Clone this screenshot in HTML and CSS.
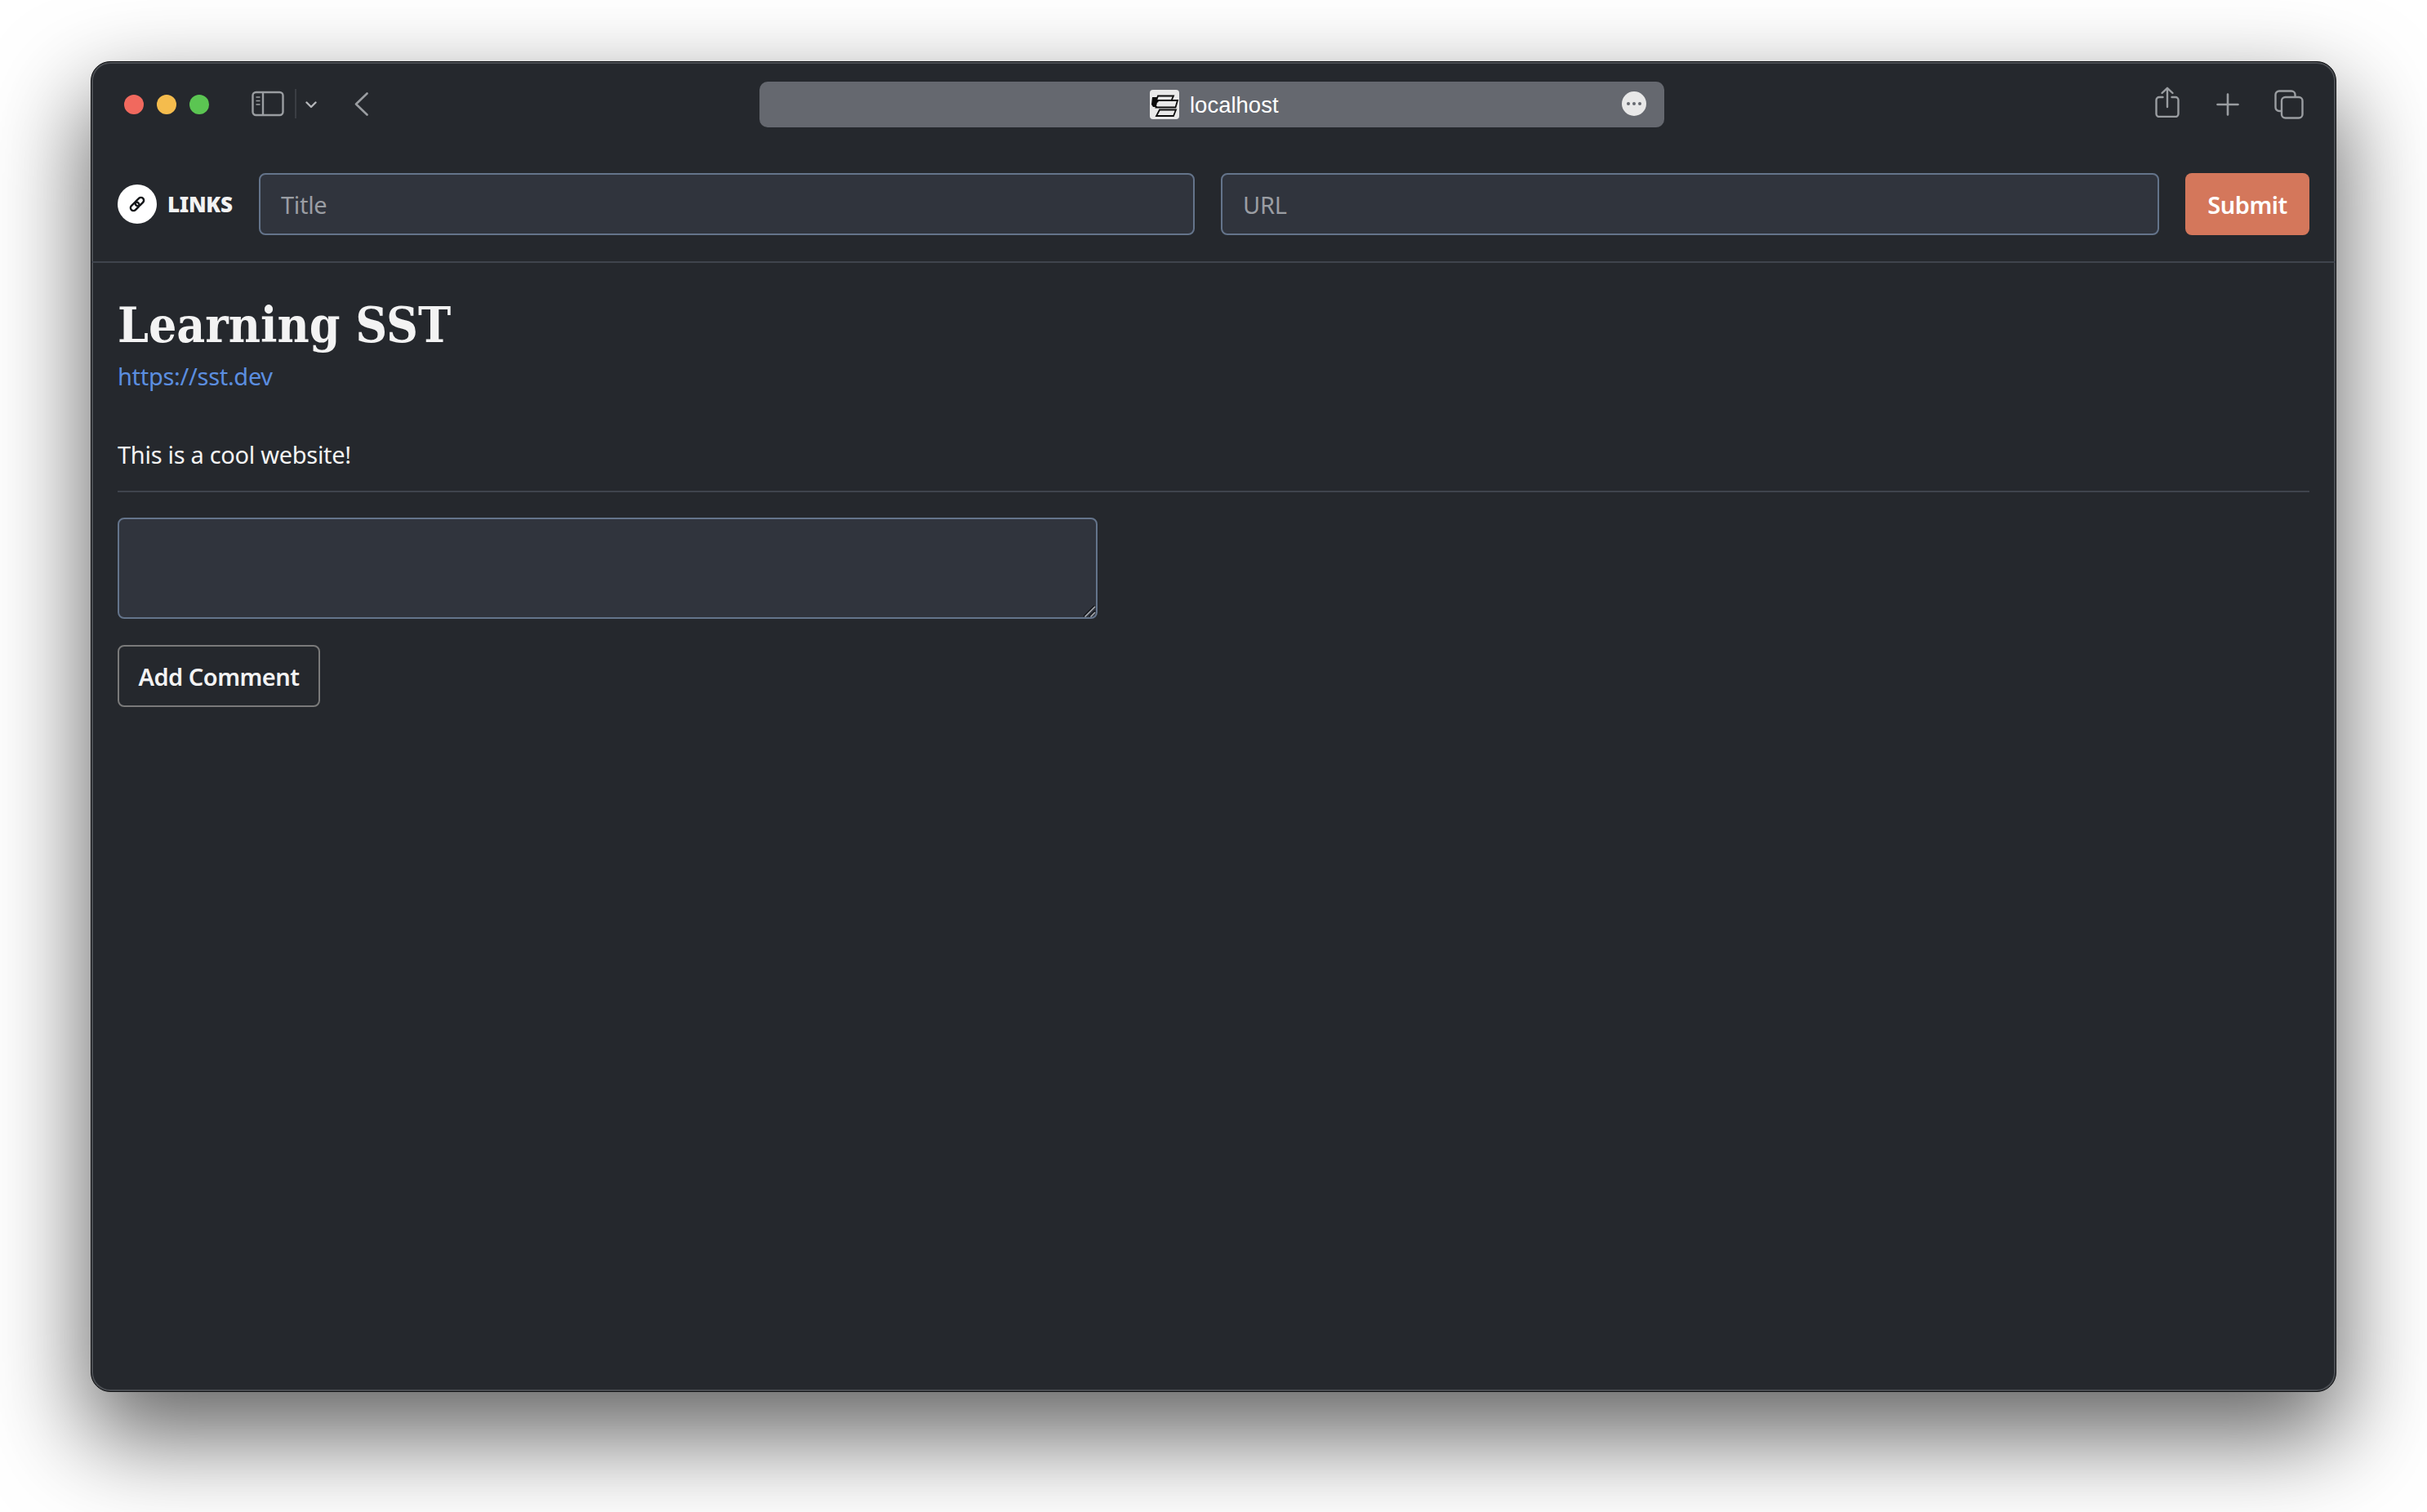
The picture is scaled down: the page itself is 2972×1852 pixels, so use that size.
FILE: index.html
```html
<!DOCTYPE html>
<html lang="en">
<head>
<meta charset="utf-8">
<title>Links</title>
<link rel="stylesheet" href="styles.css">
</head>
<body>
<div class="window">
  <div class="toolbar">
    <div class="tb-left">
      <span class="dot dot-red"></span><span class="dot dot-yellow"></span><span class="dot dot-green"></span>
      <svg class="ic-sidebar" width="40" height="32" viewBox="0 0 40 32" fill="none" stroke="#9a9da1" stroke-width="2.4"><rect x="1.5" y="2" width="37" height="28" rx="4"/><path d="M14 2v28"/><path d="M5.5 8h5M5.5 12.5h5M5.5 17h5" stroke-width="1.6"/></svg>
      <span class="tb-divider"></span>
      <svg class="ic-chev" width="14" height="9" viewBox="0 0 14 9" fill="none" stroke="#b4b6b9" stroke-width="2.4" stroke-linecap="round" stroke-linejoin="round"><path d="M1.5 1.5 7 7l5.500-5.500"/></svg>
      <svg class="ic-back" width="17" height="29" viewBox="0 0 17 29" fill="none" stroke="#9a9da1" stroke-width="2.600" stroke-linecap="round" stroke-linejoin="round"><path d="M15.500 1.500 2 14.500l13.500 13"/></svg>
    </div>
    <div class="address">
      <svg class="favicon" width="36" height="36" viewBox="0 0 36 36"><rect width="36" height="36" rx="4" fill="#e9e9e9"/><path d="M3 9h7l-2 4h3l-3 8H4l-2-3z" fill="#0c0c0c"/><path d="M10 7.500h19l-2.500 5.500H8zM10 13h24l-2.500 8.500H7.500z" fill="#e9e9e9" stroke="#0c0c0c" stroke-width="1.800"/><path d="M12 24.500h20l-3 7.500H8z" fill="#e9e9e9" stroke="#0c0c0c" stroke-width="1.800"/><path d="M9 15.500h21l-2 4.500H8z" fill="#e9e9e9"/></svg>
      <span class="host">localhost</span>
      <span class="more"><i></i><i></i><i></i></span>
    </div>
    <div class="tb-right">
      <svg class="ic-share" width="30" height="38" viewBox="0 0 30 38" fill="none" stroke="#9a9da1" stroke-width="2.400" stroke-linecap="round" stroke-linejoin="round"><path d="M9.500 13H5a3.500 3.500 0 0 0-3.500 3.500v17A3.500 3.500 0 0 0 5 37h20a3.500 3.500 0 0 0 3.500-3.500v-17A3.500 3.500 0 0 0 25 13h-4.500"/><path d="M15 25V2M8.500 8 15 1.800 21.500 8"/></svg>
      <svg class="ic-plus" width="28" height="28" viewBox="0 0 28 28" fill="none" stroke="#9a9da1" stroke-width="2.600" stroke-linecap="round"><path d="M14 1.500v25M1.500 14h25"/></svg>
      <svg width="36" height="36" viewBox="0 0 36 36" fill="none" stroke="#9a9da1" stroke-width="2.400"><path d="M9 26H6a4.500 4.500 0 0 1-4.500-4.500V6A4.500 4.500 0 0 1 6 1.500h15A4.500 4.500 0 0 1 25.500 6v3"/><rect x="9" y="9" width="25.500" height="25.500" rx="4.500"/></svg>
    </div>
  </div>
  <form class="header">
    <div class="logo">
      <span class="logo-mark"><svg width="22" height="22" viewBox="0 0 22 22" fill="none" stroke="#16181b" stroke-width="2.500"><g transform="rotate(-45 11 11)"><rect x="1" y="7.500" width="12" height="7" rx="3.500"/><rect x="9" y="7.500" width="12" height="7" rx="3.500"/></g></svg></span>
      <span class="logo-text">LINKS</span>
    </div>
    <input class="field" type="text" placeholder="Title">
    <input class="field field-url" type="text" placeholder="URL">
    <button class="submit" type="button">Submit</button>
  </form>
  <main class="content">
    <h1 class="title">Learning SST</h1>
    <a class="link" href="#">https://sst.dev</a>
    <p class="desc">This is a cool website!</p>
    <hr class="rule">
    <div class="comment-wrap">
      <textarea class="comment"></textarea>
      <svg class="grip" width="16" height="16" viewBox="0 0 16 16" fill="none" stroke-width="1.600"><path d="M1 15 14 2" stroke="#111317"/><path d="M2.500 15.500 15 3" stroke="#a9acb1"/><path d="M8 15l7-7" stroke="#111317"/><path d="M9.500 15.500l5.500-5.500" stroke="#a9acb1"/></svg>
    </div>
    <button class="add" type="button">Add Comment</button>
  </main>
</div>
</body>
</html>
```
FILE: styles.css
```css
* { box-sizing: border-box; }
html, body { margin: 0; height: 100%; }
body {
  background: #fff;
  padding: 75px 111px 147px;
  font-family: "Noto Sans", "Lato", sans-serif;
  font-size: 29px;
  letter-spacing: -0.3px;
  color: #f3f3f3;
}
.window {
  height: 1630px;
  display: flex;
  flex-direction: column;
  background: #25282d;
  border: 1px solid #0f1012;
  border-radius: 24px;
  box-shadow: inset 0 0 0 2px #4a4d52, 0 50px 115px 6px rgba(0,0,0,.6);
}
.toolbar {
  height: 104px;
  flex: none;
  display: grid;
  grid-template-columns: 818px 1108px 1fr;
  align-items: start;
}
.tb-left {
  display: flex;
  align-items: center;
  height: 104px;
  padding-left: 40px;
}
.dot { width: 24px; height: 24px; border-radius: 50%; margin-right: 16px; }
.dot-red { background: #f1695e; }
.dot-yellow { background: #f5bc4d; }
.dot-green { background: #5bc552; margin-right: 52px; }
.ic-sidebar { flex: none; margin-top: -2px; }
.tb-divider { width: 2px; height: 36px; background: #3a3d43; margin: -2px 11px 0 13px; }
.ic-chev { flex: none; margin-top: 1px; }
.ic-back { flex: none; margin: -2px 0 0 46px; }
.address {
  height: 56px;
  margin-top: 24px;
  background: #65686f;
  border-radius: 10px;
  display: flex;
  align-items: center;
  padding-left: 478px;
  padding-right: 22px;
}
.favicon { flex: none; margin-right: 13px; }
.host {
  font-family: "Liberation Sans", Arial, sans-serif;
  font-size: 27.500px;
  letter-spacing: 0;
  color: #fff;
  padding-top: 2px;
}
.more {
  margin-left: auto;
  width: 30px; height: 30px;
  border-radius: 50%;
  background: #e8e8e8;
  display: flex;
  align-items: center;
  justify-content: center;
  gap: 3px;
  margin-top: -2px;
}
.more i { width: 4px; height: 4px; border-radius: 50%; background: #65686f; }
.tb-right {
  display: flex;
  align-items: center;
  justify-content: flex-end;
  gap: 43px;
  height: 104px;
  padding-right: 39px;
}
.ic-share { margin: -6px 2px 0 0; }
.header {
  height: 142px;
  flex: none;
  display: flex;
  gap: 32px;
  padding: 32px;
  border-bottom: 2px solid #3f444d;
}
.logo { width: 141px; flex: none; display: flex; align-items: center; gap: 13px; }
.logo-mark {
  width: 48px; height: 48px;
  border-radius: 50%;
  background: #fff;
  display: flex;
  align-items: center;
  justify-content: center;
}
.logo-text { font-weight: 900; font-size: 26px; letter-spacing: -0.3px; color: #f3f3f3; }
.field {
  flex: 1;
  min-width: 0;
  height: 76px;
  padding: 0 25px;
  background: #30343d;
  border: 2px solid #64748b;
  border-radius: 8px;
  color: #f3f3f3;
  font: inherit;
  letter-spacing: inherit;
}
.field-url { flex: none; width: 1149px; }
.field::placeholder { color: #9a9da3; opacity: 1; }
.submit {
  flex: none;
  width: 152px;
  height: 76px;
  border: 0;
  border-radius: 8px;
  background: #d4775b;
  color: #fff;
  font: 600 29px "Noto Sans", "Lato", sans-serif;
  letter-spacing: -0.5px;
}
.content {
  padding: 37px 32px 32px;
  display: flex;
  flex-direction: column;
  align-items: flex-start;
}
.title {
  margin: 0;
  font: 700 60px/78px "DejaVu Serif", serif;
  font-stretch: condensed;
  letter-spacing: 0;
  color: #f3f3f3;
}
.link {
  color: #5b8ee0;
  text-decoration: none;
  line-height: 48px;
}
.desc { margin: 48px 0 0; line-height: 48px; }
.rule {
  width: 100%;
  height: 2px;
  margin: 20px 0 0;
  border: 0;
  background: #3f444d;
}
.comment-wrap { position: relative; margin-top: 31px; height: 124px; }
.comment {
  display: block;
  width: 1200px;
  height: 124px;
  background: #30343d;
  border: 2px solid #64748b;
  border-radius: 8px;
  color: #f3f3f3;
  font: inherit;
  resize: none;
}
.grip { position: absolute; right: 2px; bottom: 2px; }
.add {
  margin-top: 32px;
  width: 248px;
  height: 76px;
  background: transparent;
  border: 2px solid #7a7a7a;
  border-radius: 8px;
  color: #f3f3f3;
  font: 600 29px "Noto Sans", "Lato", sans-serif;
  letter-spacing: -0.5px;
}
```
